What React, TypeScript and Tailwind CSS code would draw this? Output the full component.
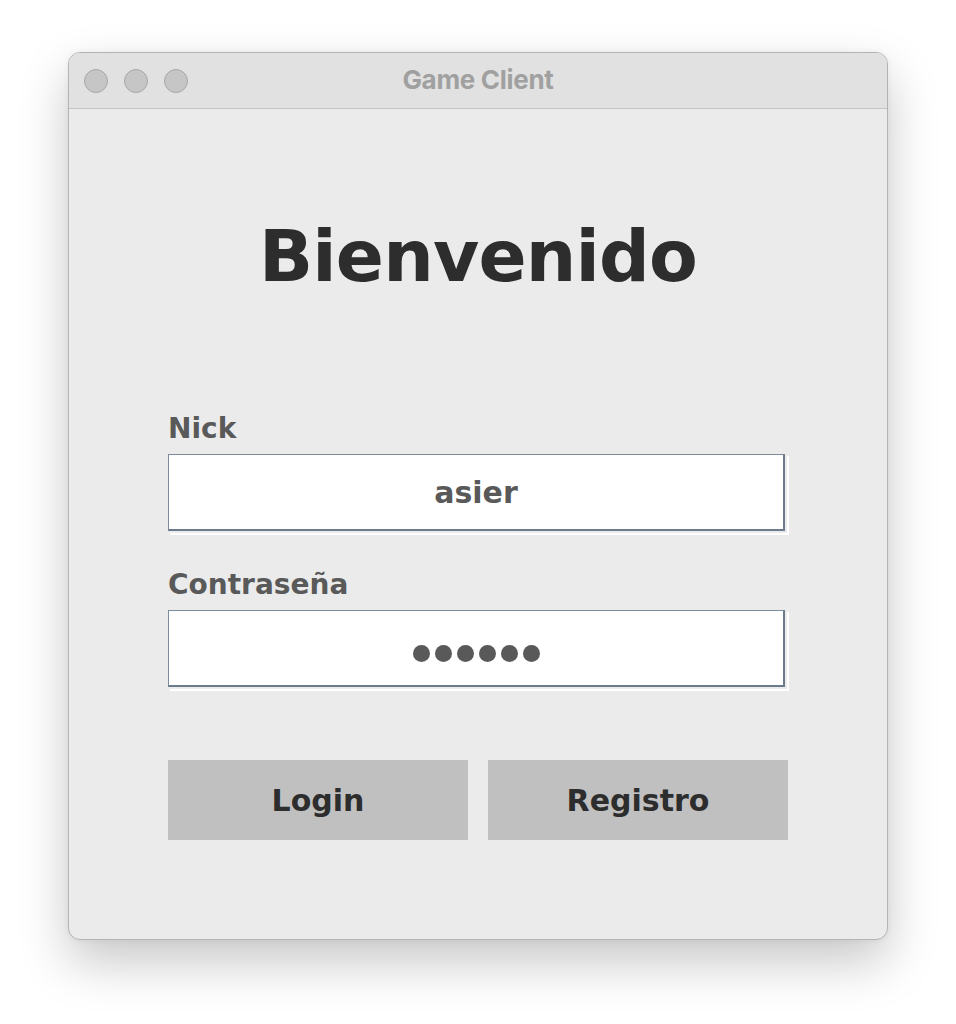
import React from "react";

const dv = { fontFamily: '"DejaVu Sans", Verdana, sans-serif' };

function Field({ children }: { children: React.ReactNode }) {
  return (
    <div className="h-[79px] w-[619px] shadow-[2px_2px_0_0_#ffffff]">
      <div className="flex h-[77px] w-[617px] items-center justify-center border-t border-l border-r-2 border-b-2 border-t-[#7d8c9c] border-l-[#7d8c9c] border-r-[#6c7b8b] border-b-[#6c7b8b] bg-white">
        {children}
      </div>
    </div>
  );
}

export default function App() {
  return (
    <div className="min-h-[1024px] w-full bg-white pt-[52px]">
      <div className="mx-auto flex h-[888px] w-[820px] flex-col overflow-hidden rounded-[12px] border border-[#b4b4b4] bg-[#ebebeb] shadow-[0_22px_50px_rgba(0,0,0,0.22),0_0_6px_rgba(0,0,0,0.06)]">
        <div className="relative flex h-[56px] shrink-0 items-center border-b border-[#c4c4c4] bg-[#e1e1e1] px-[15px]">
          <div className="flex gap-[16px]">
            <div className="h-[24px] w-[24px] rounded-full border border-[#a9a9a9] bg-[#c6c6c6]" />
            <div className="h-[24px] w-[24px] rounded-full border border-[#a9a9a9] bg-[#c6c6c6]" />
            <div className="h-[24px] w-[24px] rounded-full border border-[#a9a9a9] bg-[#c6c6c6]" />
          </div>
          <div
            className="absolute inset-0 flex items-center justify-center pb-[2px] text-[26px] font-bold tracking-[-0.3px] text-[#a0a0a0]"
            style={{ fontFamily: 'Inter, "Liberation Sans", sans-serif' }}
          >
            Game Client
          </div>
        </div>
        <div className="flex flex-col px-[99px]" style={dv}>
          <div className="mt-[110px] text-center text-[71px] font-bold leading-[75px] tracking-[-0.8px] text-[#2d2d2d]">
            Bienvenido
          </div>
          <div className="mt-[121px] text-[28px] font-bold leading-[28px] text-[#595959]">Nick</div>
          <div className="mt-[11px]">
            <Field>
              <span className="pt-[2px] text-[30px] font-bold leading-none text-[#595959]">asier</span>
            </Field>
          </div>
          <div className="mt-[38px] text-[28px] font-bold leading-[28px] text-[#595959]">Contraseña</div>
          <div className="mt-[11px]">
            <Field>
              <div className="flex gap-[5px] pt-[11px]">
                {[0, 1, 2, 3, 4, 5].map((i) => (
                  <div key={i} className="h-[17px] w-[17px] rounded-full bg-[#595959]" />
                ))}
              </div>
            </Field>
          </div>
          <div className="mt-[71px] flex gap-[20px]">
            <div className="flex h-[80px] w-[300px] items-center justify-center bg-[#c0c0c0] text-[30px] font-bold text-[#2d2d2d]">
              Login
            </div>
            <div className="flex h-[80px] w-[300px] items-center justify-center bg-[#c0c0c0] text-[30px] font-bold text-[#2d2d2d]">
              Registro
            </div>
          </div>
        </div>
      </div>
    </div>
  );
}
